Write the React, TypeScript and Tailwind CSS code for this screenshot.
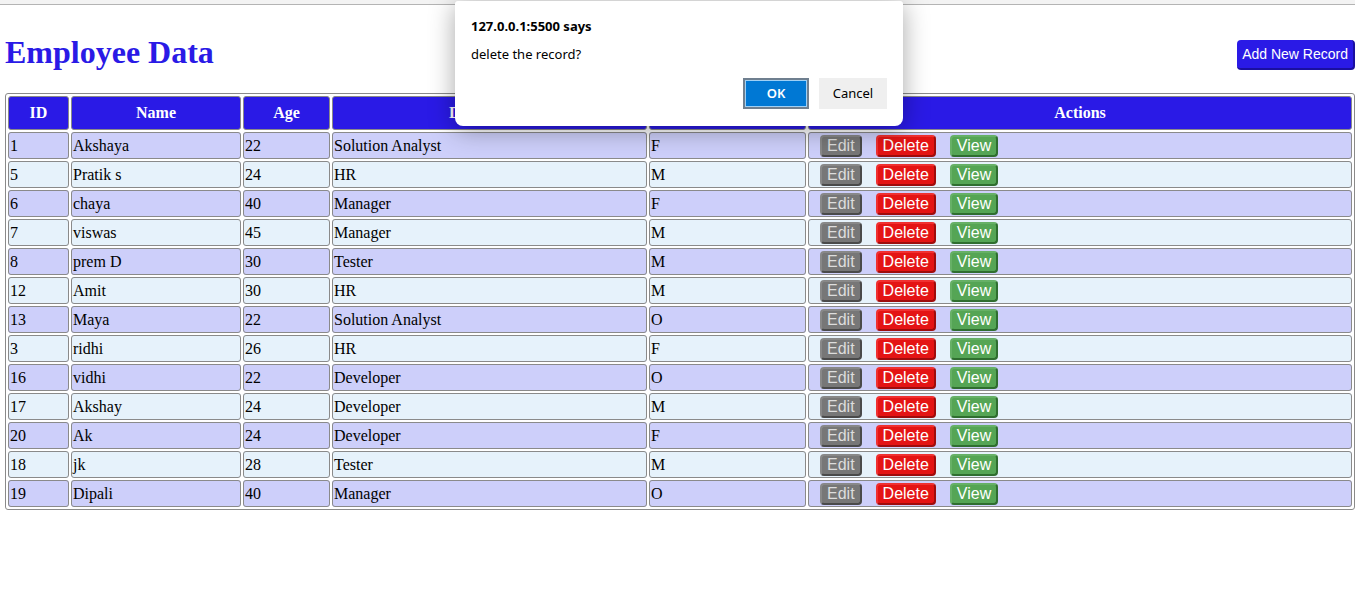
import React from "react";

const rows = [
  { id: 1, name: "Akshaya", age: 22, designation: "Solution Analyst", gender: "F" },
  { id: 5, name: "Pratik s", age: 24, designation: "HR", gender: "M" },
  { id: 6, name: "chaya", age: 40, designation: "Manager", gender: "F" },
  { id: 7, name: "viswas", age: 45, designation: "Manager", gender: "M" },
  { id: 8, name: "prem D", age: 30, designation: "Tester", gender: "M" },
  { id: 12, name: "Amit", age: 30, designation: "HR", gender: "M" },
  { id: 13, name: "Maya", age: 22, designation: "Solution Analyst", gender: "O" },
  { id: 3, name: "ridhi", age: 26, designation: "HR", gender: "F" },
  { id: 16, name: "vidhi", age: 22, designation: "Developer", gender: "O" },
  { id: 17, name: "Akshay", age: 24, designation: "Developer", gender: "M" },
  { id: 20, name: "Ak", age: 24, designation: "Developer", gender: "F" },
  { id: 18, name: "jk", age: 28, designation: "Tester", gender: "M" },
  { id: 19, name: "Dipali", age: 40, designation: "Manager", gender: "O" },
];

const headers = ["ID", "Name", "Age", "Designation", "Gender", "Actions"];
const widths = ["w-[61px]", "w-[170px]", "w-[87px]", "w-[315px]", "w-[157px]", "w-[544px]"];

const cell = "border border-[#8a8a8a] rounded-[3px] px-[1px] h-[27px] text-left align-middle";

export default function App() {
  return (
    <div className="relative min-h-screen bg-white font-['Liberation_Serif',serif] text-black">
      <div className="h-[5px] bg-[#f3f3f3] border-b border-[#b4b4b4]" />

      <div className="pl-[5px] pt-[29px]">
        <div className="flex justify-between items-start w-[1350px]">
          <h1 className="text-[32px] leading-[37px] font-bold text-[#2a1ae6]">Employee Data</h1>
          <button className="mt-[6px] h-[30px] px-[5px] rounded-[4px] bg-[#2a1ae6] border-b-2 border-r-2 border-[#1a0fa0] text-white text-[14px] font-['Liberation_Sans',sans-serif]">
            Add New Record
          </button>
        </div>

        <table className="mt-[22px] w-[1350px] table-fixed border-separate border-spacing-[2px] border border-[#8a8a8a] rounded-[3px]">
          <thead>
            <tr>
              {headers.map((h, i) => (
                <th
                  key={h}
                  className={`${widths[i]} h-[34px] border border-[#8a8a8a] rounded-[3px] bg-[#2a1ae6] text-white text-[16px] font-bold text-center`}
                >
                  {h}
                </th>
              ))}
            </tr>
          </thead>
          <tbody>
            {rows.map((r, i) => (
              <tr key={r.id} className={i % 2 === 0 ? "bg-[#cdcffa]" : "bg-[#e6f2fb]"}>
                <td className={cell}>{r.id}</td>
                <td className={cell}>{r.name}</td>
                <td className={cell}>{r.age}</td>
                <td className={cell}>{r.designation}</td>
                <td className={cell}>{r.gender}</td>
                <td className={cell}>
                  <div className="flex items-center gap-[14px] pl-[10px] font-['Liberation_Sans',sans-serif] text-[16px] leading-[18px]">
                    <button className="h-[22px] px-[5px] rounded-[4px] bg-[#777777] border-2 border-t-[#888888] border-l-[#888888] border-b-[#4a4a4a] border-r-[#4a4a4a] text-[#dddddd]">
                      Edit
                    </button>
                    <button className="h-[22px] px-[5px] rounded-[4px] bg-[#e41414] border-2 border-t-[#f03030] border-l-[#f03030] border-b-[#a00c0c] border-r-[#a00c0c] text-white">
                      Delete
                    </button>
                    <button className="h-[22px] px-[5px] rounded-[4px] bg-[#55a555] border-2 border-t-[#66b066] border-l-[#66b066] border-b-[#2f6e2f] border-r-[#2f6e2f] text-white">
                      View
                    </button>
                  </div>
                </td>
              </tr>
            ))}
          </tbody>
        </table>
      </div>

      {/* browser confirm dialog */}
      <div className="absolute left-[455px] top-[1px] w-[448px] h-[125px] bg-white rounded-b-[8px] rounded-t-[3px] shadow-[0_4px_26px_rgba(0,0,0,0.35)] font-['Noto_Sans',sans-serif] text-[13px] text-black">
        <div className="pl-[16px] pt-[16px] font-bold leading-[18px]">127.0.0.1:5500 says</div>
        <div className="pl-[16px] pt-[10px] leading-[18px]">delete the record?</div>
        <div className="flex justify-end gap-[10px] pr-[16px] pt-[15px]">
          <button className="w-[66px] h-[31px] bg-[#0078d4] border-2 border-[#6f7f8f] outline outline-1 outline-[#9fd0f5] outline-offset-[-3px] text-white font-semibold">
            OK
          </button>
          <button className="w-[68px] h-[31px] bg-[#efefef] text-black">Cancel</button>
        </div>
      </div>
    </div>
  );
}
